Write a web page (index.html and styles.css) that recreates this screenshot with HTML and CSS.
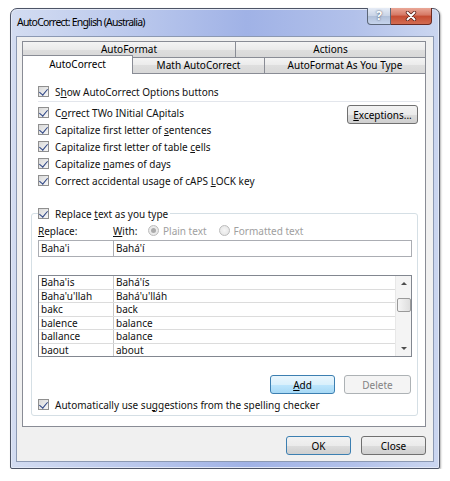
FILE: index.html
```html
<!DOCTYPE html>
<html lang="en">
<head>
    <meta charset="UTF-8">
    <title>AutoCorrect: English (Australia)</title>
    <link rel="stylesheet" href="styles.css">
</head>
<body>
    <div class="window">
        <div class="titlebar">
            <span class="title">AutoCorrect: English (Australia)</span>
            <div class="caption">
                <span class="cap-help">?</span>
                <span class="cap-close">
                    <svg width="14" height="10" viewBox="0 0 14 10">
                        <path d="M3.5 1.5 L10.5 8.5 M10.5 1.5 L3.5 8.5" stroke="#5a2018" stroke-width="3.4" stroke-linecap="round"/>
                        <path d="M3.5 1.5 L10.5 8.5 M10.5 1.5 L3.5 8.5" stroke="#ffffff" stroke-width="1.9" stroke-linecap="round"/>
                    </svg>
                </span>
            </div>
        </div>

        <div class="client">
            <div class="tab-row">
                <div class="tab tab-autoformat">AutoFormat</div>
                <div class="tab tab-actions">Actions</div>
            </div>
            <div class="tab-row">
                <div class="tab tab-autocorrect">AutoCorrect</div>
                <div class="tab tab-math">Math AutoCorrect</div>
                <div class="tab tab-aftyt">AutoFormat As You Type</div>
            </div>

            <div class="panel">
                <label class="check"><span class="box"></span><span>S<u>h</u>ow AutoCorrect Options buttons</span></label>
                <div class="sep"></div>

                <div class="options">
                    <div>
                        <label class="check"><span class="box"></span><span>C<u>o</u>rrect TWo INitial CApitals</span></label>
                        <label class="check"><span class="box"></span><span>Capitalize first letter of <u>s</u>entences</span></label>
                        <label class="check"><span class="box"></span><span>Capitalize first letter of table <u>c</u>ells</span></label>
                        <label class="check"><span class="box"></span><span>Capitalize <u>n</u>ames of days</span></label>
                        <label class="check"><span class="box"></span><span>Correct accidental usage of cAPS <u>L</u>OCK key</span></label>
                    </div>
                    <button class="btn btn-exceptions"><span><u>E</u>xceptions...</span></button>
                </div>

                <fieldset class="group">
                    <legend><label class="check"><span class="box"></span><span>Replace <u>t</u>ext as you type</span></label></legend>

                    <div class="labels">
                        <span class="lbl-replace"><u>R</u>eplace:</span>
                        <span class="lbl-with"><u>W</u>ith:</span>
                        <span class="radio on"></span><span class="disabled">Plain text</span>
                        <span class="radio radio-2"></span><span class="disabled">Formatted text</span>
                    </div>

                    <div class="inputs">
                        <div class="field field-replace">Baha'i</div>
                        <div class="field field-with">Bahá'í</div>
                    </div>

                    <div class="list">
                        <div class="rows">
                            <div class="row"><span>Baha'is</span><span>Bahá'ís</span></div>
                            <div class="row"><span>Baha'u'llah</span><span>Bahá'u'lláh</span></div>
                            <div class="row"><span>bakc</span><span>back</span></div>
                            <div class="row"><span>balence</span><span>balance</span></div>
                            <div class="row"><span>ballance</span><span>balance</span></div>
                            <div class="row"><span>baout</span><span>about</span></div>
                        </div>
                        <div class="scroll">
                            <div class="arrow"><span class="arrow-up"></span></div>
                            <div class="thumb"></div>
                            <div class="arrow arrow-bottom"><span class="arrow-down"></span></div>
                        </div>
                    </div>

                    <div class="actions">
                        <button class="btn btn-add"><span><u>A</u>dd</span></button>
                        <button class="btn btn-delete">Delete</button>
                    </div>

                    <label class="check auto-check"><span class="box"></span><span>Automatically use su<u>g</u>gestions from the spelling checker</span></label>
                </fieldset>
            </div>

            <div class="footer">
                <button class="btn btn-ok">OK</button>
                <button class="btn btn-close">Close</button>
            </div>
        </div>
    </div>
</body>
</html>
```

FILE: styles.css
```css
* {
    box-sizing: border-box;
}

body {
    margin: 0;
    background-color: #ffffff;
    font-family: 'Noto Sans', sans-serif;
    font-size: 10px;
    color: #111111;
}

u {
    text-underline-offset: 1px;
}

.window {
    display: flex;
    flex-direction: column;
    width: 430px;
    height: 461px;
    margin: 8px 0 0 10px;
    padding: 0 5px 6px;
    border: 1px solid #4d5466;
    border-radius: 7px 7px 2px 2px;
    background: linear-gradient(90deg, #d3dcf1 0%, #b9c7ec 30%, #a0b2e6 55%, #b2c1ea 80%, #cbd6f0 100%);
    box-shadow: inset 0 0 0 1px #e2e8f6, 1px 1px 2px rgba(0, 0, 0, 0.3);
}

/* Title bar */
.titlebar {
    display: flex;
    justify-content: space-between;
    align-items: flex-start;
    height: 27px;
}

.title {
    margin-top: 6px;
    padding-left: 1px;
    font-size: 10.5px;
    letter-spacing: -0.8px;
    line-height: 15px;
    color: #000000;
}

.caption {
    display: flex;
    margin-top: -1px;
    margin-right: 2px;
}

.cap-help {
    width: 24px;
    height: 17px;
    border: 1px solid #5b6678;
    border-top: none;
    border-radius: 0 0 0 4px;
    background: linear-gradient(#e6ecf6, #c8d3e6 50%, #b0bfd8 50%, #c6d4ec);
    color: #ffffff;
    font-weight: bold;
    font-size: 12px;
    line-height: 16px;
    text-align: center;
    text-shadow: 0 0 2px #2b3a55;
}

.cap-close {
    display: flex;
    justify-content: center;
    align-items: center;
    width: 41px;
    height: 17px;
    border: 1px solid #6b2a22;
    border-top: none;
    border-left: none;
    border-radius: 0 0 4px 0;
    background: linear-gradient(#eaa898, #d57763 45%, #c54b31 50%, #d36c51);
}

/* Client area */
.client {
    flex: 1;
    padding: 4px 7px 0 5px;
    border: 1px solid #8c99b3;
    background-color: #f0f0f0;
}

.tab-row {
    display: flex;
    align-items: flex-start;
    height: 16px;
}

.tab {
    height: 16px;
    border: 1px solid #898c95;
    border-bottom: none;
    background: linear-gradient(#f4f4f4, #eaeaea 50%, #dedede 50%, #d8d8d8);
    color: #000000;
    line-height: 15px;
    text-align: center;
}

.tab + .tab {
    margin-left: -1px;
}

.tab-autoformat { width: 214px; }
.tab-actions { width: 191px; }
.tab-math { width: 133px; }
.tab-aftyt { width: 162px; }

.tab-autocorrect {
    position: relative;
    z-index: 1;
    width: 111px;
    height: 19px;
    margin-top: -2px;
    background: #ffffff;
    line-height: 17px;
}

.panel {
    height: 354px;
    padding: 9px 5px 0 15px;
    border: 1px solid #898c95;
    background-color: #ffffff;
}

.check {
    display: flex;
    align-items: center;
    gap: 6px;
    height: 17px;
    white-space: nowrap;
}

.box {
    display: flex;
    justify-content: center;
    align-items: center;
    flex-shrink: 0;
    width: 11px;
    height: 11px;
    border: 1px solid #8f8f8f;
    background: linear-gradient(135deg, #d9d9d9, #f7f7f7);
}

.box::after {
    content: '';
    width: 4px;
    height: 7px;
    margin-top: -2px;
    border: solid #2b4383;
    border-width: 0 1.6px 1.6px 0;
    transform: rotate(40deg);
}

.sep {
    height: 1px;
    margin: 1px 0 2px;
    background-color: #e3e6ec;
}

.options {
    display: flex;
    justify-content: space-between;
    align-items: flex-start;
}

.btn {
    display: flex;
    justify-content: center;
    align-items: center;
    height: 19px;
    padding: 0;
    border: 1px solid #707070;
    border-radius: 3px;
    background: linear-gradient(#f2f2f2, #ebebeb 50%, #dddddd 50%, #cfcfcf);
    color: #000000;
    font: inherit;
}

.btn-exceptions {
    width: 71px;
    margin-top: 1px;
    margin-right: 2px;
}

/* Replace group */
.group {
    margin: 16px 2px 0 -7px;
    padding: 0 5px 2px 6px;
    border: 1px solid #d5dfe5;
    border-radius: 3px;
}

.group legend {
    padding: 0 2px 0 0;
}

.labels {
    display: flex;
    align-items: center;
    height: 17px;
}

.lbl-replace { width: 75px; }
.lbl-with { width: 35px; }

.radio {
    display: flex;
    justify-content: center;
    align-items: center;
    width: 11px;
    height: 11px;
    margin-right: 4px;
    border: 1px solid #bcbcbc;
    border-radius: 50%;
    background: radial-gradient(#f6f6f6, #e2e2e2);
}

.radio.on::after {
    content: '';
    width: 5px;
    height: 5px;
    border-radius: 50%;
    background-color: #ababab;
}

.radio-2 {
    margin-left: 12px;
}

.disabled {
    color: #a0a0a0;
}

.inputs {
    display: flex;
    height: 17px;
    margin-top: 1px;
}

.field {
    padding-left: 2px;
    border: 1px solid #abadb3;
    line-height: 15px;
}

.field-replace { width: 76px; }

.field-with {
    flex: 1;
    margin-left: -1px;
}

.list {
    display: flex;
    height: 82px;
    margin-top: 18px;
    border: 1px solid #828790;
    overflow: hidden;
}

.rows {
    flex: 1;
}

.row {
    display: grid;
    grid-template-columns: 75px 1fr;
    height: 13.5px;
    border-bottom: 1px solid #dcdcdc;
    line-height: 12.5px;
}

.row span {
    padding-left: 2px;
}

.row span:first-child {
    border-right: 1px solid #c8c8c8;
}

.scroll {
    display: flex;
    flex-direction: column;
    align-items: center;
    width: 16px;
    border-left: 1px solid #e8e8e8;
    background-color: #f4f4f4;
}

.arrow {
    display: flex;
    justify-content: center;
    align-items: center;
    height: 15px;
}

.arrow-bottom {
    margin-top: auto;
}

.arrow-up {
    border-left: 3px solid transparent;
    border-right: 3px solid transparent;
    border-bottom: 3px solid #4d4d4d;
}

.arrow-down {
    border-left: 3px solid transparent;
    border-right: 3px solid transparent;
    border-top: 3px solid #4d4d4d;
}

.thumb {
    width: 14px;
    height: 14px;
    margin-top: 7px;
    border: 1px solid #9a9a9a;
    border-radius: 2px;
    background: linear-gradient(90deg, #f5f5f5, #dedede);
}

.actions {
    display: flex;
    justify-content: flex-end;
    gap: 9px;
    margin-top: 18px;
}

.btn-add {
    width: 65px;
    border-color: #3c7fb1;
    background: linear-gradient(#eaf6fd, #d9f0fc 50%, #bee6fd 50%, #a7d9f5);
}

.btn-delete {
    width: 67px;
    margin-right: 1px;
    border-color: #adb2b5;
    background: #f4f4f4;
    color: #838383;
}

.auto-check {
    margin-top: 2px;
}

.footer {
    display: flex;
    justify-content: flex-end;
    gap: 10px;
    margin-top: 9px;
}

.btn-ok {
    width: 65px;
    border-color: #3c7fb1;
}

.btn-close {
    width: 65px;
}
```
